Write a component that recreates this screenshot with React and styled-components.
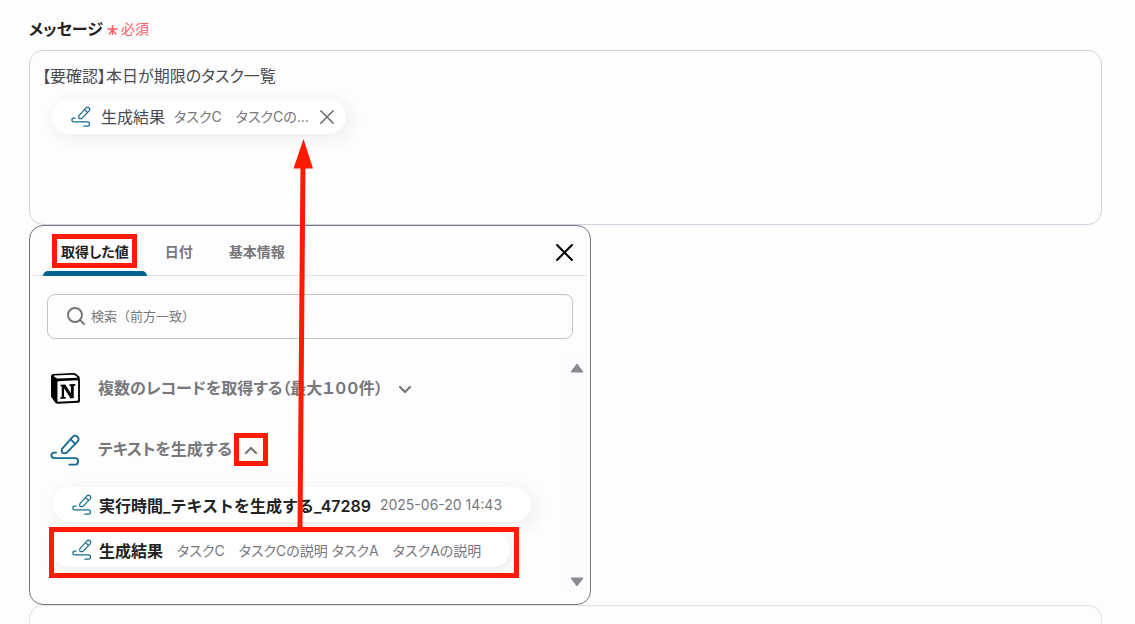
import React, { useState } from 'react';
import styled, { createGlobalStyle, css } from 'styled-components';

const GlobalStyle = createGlobalStyle`
  * {
    box-sizing: border-box;
  }

  body {
    margin: 0;
    background: #fdfdfd;
    color: #222222;
    font-family: Inter, "Noto Sans CJK JP", sans-serif;
    font-feature-settings: "palt";
  }

  button, input, textarea {
    font-family: inherit;
    margin: 0;
    padding: 0;
    border: 0;
    background: none;
    outline: none;
  }

  button {
    font-feature-settings: inherit;
    cursor: pointer;
  }

  svg {
    display: block;
    flex: none;
  }
`

const Page = styled.main`
  position: relative;
  padding: 16px 33px 0 29px;
`

const FieldLabel = styled.label`
  display: flex;
  align-items: center;
  height: 24px;
  margin-bottom: 10px;
  gap: 4px;
  font-size: 16px;
  font-weight: 600;
`

const Required = styled.span`
  display: flex;
  align-items: center;
  gap: 3px;
  color: #ff5c64;
  font-size: 14px;
  font-weight: 400;
`

const MessageBox = styled.section`
  min-height: 175px;
  padding: 13px 12px;
  border: 1px solid #d0d3e0;
  border-radius: 14px;
`

const MessageInput = styled.textarea`
  display: block;
  width: 100%;
  height: 24px;
  resize: none;
  overflow: hidden;
  color: #4a4a50;
  font-size: 16px;
  line-height: 24px;
  font-feature-settings: "palt";
`

const Pill = styled.div`
  display: flex;
  align-items: center;
  width: fit-content;
  height: 35px;
  padding: 0 ${props => props.$right || '29px'} 0 19px;
  border-radius: 18px;
  background: #ffffff;
  box-shadow: 3px 4px 14px 2px rgba(90, 60, 110, 0.07);
`

const Chip = styled(Pill)`
  margin: 11px 0 0 10px;
`

const ChipName = styled.span`
  margin: 0 9px;
  padding-bottom: 2px;
  color: #4a4a50;
  font-size: 16px;
  white-space: nowrap;
`

const ItemName = styled.span`
  margin: 0 ${props => props.$gap} 0 6px;
  font-size: 16px;
  font-weight: 600;
  font-feature-settings: normal;
  white-space: nowrap;
`

const PillValue = styled.span`
  padding-bottom: ${props => props.$raised ? '2px' : '0'};
  color: #77777c;
  font-size: 14px;
  white-space: pre;
`

const IconButton = styled.button`
  display: flex;
  color: ${props => props.$color || '#77777c'};
`

const ChipClose = styled(IconButton)`
  margin-left: 11px;
`

const Panel = styled.section`
  width: 562px;
  max-width: 100%;
  padding: 0 3px;
  border: 1px solid #77777c;
  border-radius: 14px;
`

const TabBar = styled.div`
  display: flex;
  align-items: center;
  height: 50px;
  padding: 0 14px 0 10px;
  border-bottom: 1px solid #e2e2e6;
`

const Tab = styled.button`
  position: relative;
  height: 50px;
  padding: 0 18px;
  color: #77777c;
  font-size: 14px;
  font-weight: 600;

  ${props => props.$active && css`
    color: #222222;

    &::after {
      content: '';
      position: absolute;
      left: 0;
      right: 0;
      bottom: 0;
      height: 5px;
      border-radius: 5px 5px 0 0;
      background: #00638f;
    }
  `}
`

const PanelClose = styled(IconButton)`
  margin-left: auto;
  padding-top: 4px;
`

const SearchBox = styled.label`
  display: flex;
  align-items: center;
  height: 45px;
  margin: 18px 14px 0;
  padding: 0 18px 2px;
  gap: 5px;
  border: 1px solid #c4c4c8;
  border-radius: 8px;
  color: #77777c;
`

const SearchInput = styled.input`
  flex: 1;
  min-width: 0;
  color: #222222;
  font-size: 13px;

  &::placeholder {
    color: #77777c;
    opacity: 1;
  }
`

const Results = styled.div`
  display: flex;
  justify-content: space-between;
  margin-top: 19px;
  padding-bottom: 13px;
`

const Groups = styled.div`
  flex: 1;
  min-width: 0;
  padding: 0 36px 24px 17px;
`

const GroupHeader = styled.button`
  display: flex;
  align-items: center;
  height: 61px;
  color: #77777c;
  font-size: 16px;
  font-weight: 600;
`

const GroupName = styled.span`
  margin: 0 ${props => props.$gap} 0 16px;
  padding-bottom: 4px;
  white-space: nowrap;
`

const Items = styled.div`
  display: flex;
  flex-direction: column;
  align-items: flex-start;
  gap: 10px;
  padding: 7px 0 0 3px;
`

const ScrollRail = styled.div`
  display: flex;
  flex-direction: column;
  justify-content: space-between;
  align-items: center;
  width: 20px;
  padding: 5px 0 4px;
  background: #fbfafc;
`

const NextBox = styled.section`
  height: 19px;
  border: 1px solid #e2e2e6;
  border-bottom: 0;
  border-radius: 14px 14px 0 0;
`

// red guide frame laid over the part it points at
const Marked = styled.span`
  position: relative;
  display: inline-flex;

  &::after {
    content: '';
    position: absolute;
    inset: ${props => props.$inset};
    border: 5px solid #ff1a00;
    pointer-events: none;
  }
`

const GuideArrow = styled.svg`
  position: absolute;
  left: 290px;
  top: 138px;
  pointer-events: none;
`

const GenerateIcon = ({ size }) => (
  <svg width={size} height={size} viewBox="0 0 33 33" fill="none" stroke="#156c8f" strokeWidth="1.9" strokeLinecap="round" strokeLinejoin="round">
    <path d="M12.2 18.4 V15.6 L23.6 2.8 Q25.8 0.6 28.2 2.8 Q30.6 5 28.6 7.6 L16.8 19.8 H13.6 Q12.2 19.8 12.2 18.4 Z" />
    <path d="M21.4 5.6 L26 10.2" />
    <path d="M6.3 19.2 H4.6 Q1.4 19.2 1.4 22 Q1.4 24.8 4.6 24.8 H26.2 Q29 24.8 29 28.2 Q29 31.6 26.2 31.6 H20" />
  </svg>
)

const NotionIcon = () => (
  <svg width="32" height="31" viewBox="0 0 31 30">
    <path d="M3 0.9 L22.5 0 Q24 0 25.2 0.8 L28.2 3.3 Q29 4.3 29 6 V27 Q29 28.6 27.5 28.8 L7.5 29.7 Q6 29.7 5.2 28.8 L1.5 23.7 Q1 23 1 22 V3.2 Q1 1.2 3 0.9 Z" fill="#000" />
    <path d="M4 2.5 L22.2 1.6 Q23.3 1.5 24.2 2.2 L26.4 3.9 Q26.9 4.4 26.2 4.5 L8.2 5.4 Q7.1 5.5 6.1 4.8 L3.8 3.2 Q3.2 2.6 4 2.5 Z" fill="#fff" />
    <path d="M8 8 L26.4 7 Q27.2 7 27.2 7.9 V25.9 Q27.2 26.8 26.3 26.9 L8.3 27.8 Q7.2 27.9 7.2 26.8 V9 Q7.2 8.1 8 8 Z" fill="#fff" />
    <path d="M10.2 11.4 L14.8 11.1 L20.2 19.6 V12.8 L18.8 12.3 V10.9 L24.6 10.6 V12 L23 12.5 V24.3 L20 24.6 L13.6 14.8 V23 L15.4 23.5 V24.8 L10 25.1 V23.8 L11.4 23.2 V13 L10.2 12.7 Z" fill="#000" />
  </svg>
)

const CrossIcon = ({ size, width }) => (
  <svg width={size} height={size} viewBox="0 0 16 16" stroke="currentColor" strokeWidth={width} strokeLinecap="round">
    <path d="M1 1 L15 15 M15 1 L1 15" />
  </svg>
)

const SearchIcon = () => (
  <svg width="20" height="20" viewBox="0 0 20 20" fill="none" stroke="currentColor" strokeWidth="2" strokeLinecap="round">
    <circle cx="9" cy="9" r="7" />
    <path d="M14 14 L18 18" />
  </svg>
)

const Chevron = ({ up }) => (
  <svg width="14" height="10" viewBox="0 0 14 10" fill="none" stroke="currentColor" strokeWidth="2.2" strokeLinecap="round" strokeLinejoin="round">
    <path d={up ? 'M2 8 L7 3 L12 8' : 'M2 3 L7 8 L12 3'} />
  </svg>
)

const Asterisk = () => (
  <svg width="11" height="18" viewBox="0 0 11 18" fill="none" stroke="currentColor" strokeWidth="1.4">
    <path d="M5.5 6 V16 M0.5 10 H10.5 M2 15.5 L5.5 10.5 L9 15.5" />
  </svg>
)

const ScrollArrow = ({ down }) => (
  <svg width="14" height="10" viewBox="0 0 14 10" fill="#8c8a8f" stroke="#8c8a8f" strokeLinejoin="round">
    <path d={down ? 'M1 1 H13 L7 9 Z' : 'M1 9 H13 L7 1 Z'} />
  </svg>
)

const tabs = ['取得した値', '日付', '基本情報'];

const App = () => {
  const [message, setMessage] = useState('【要確認】本日が期限のタスク一覧');
  const [query, setQuery] = useState('');
  const [activeTab, setActiveTab] = useState(tabs[0]);

  return (
    <Page>
      <GlobalStyle />
      <FieldLabel htmlFor="message">
        メッセージ
        <Required><Asterisk />必須</Required>
      </FieldLabel>
      <MessageBox>
        <MessageInput id="message" rows={1} value={message} onChange={(e) => setMessage(e.target.value)} />
        <Chip $right="12px">
          <GenerateIcon size={21} />
          <ChipName>生成結果</ChipName>
          <PillValue $raised>タスクC　タスクCの...</PillValue>
          <ChipClose aria-label="削除"><CrossIcon size={14} width={1.8} /></ChipClose>
        </Chip>
      </MessageBox>

      <Panel>
        <TabBar role="tablist">
          {tabs.map((tab, i) => (
            <Tab key={tab} role="tab" aria-selected={tab === activeTab} $active={tab === activeTab} onClick={() => setActiveTab(tab)}>
              {i === 0 ? <Marked $inset="-7px -8px -7px -9px">{tab}</Marked> : tab}
            </Tab>
          ))}
          <PanelClose $color="#000000" aria-label="閉じる"><CrossIcon size={17} width={1.9} /></PanelClose>
        </TabBar>
        <SearchBox>
          <SearchIcon />
          <SearchInput aria-label="検索" placeholder="検索（前方一致）" value={query} onChange={(e) => setQuery(e.target.value)} />
        </SearchBox>
        <Results>
          <Groups>
            <GroupHeader aria-expanded="false">
              <NotionIcon />
              <GroupName $gap="15px">複数のレコードを取得する（最大１００件）</GroupName>
              <Chevron />
            </GroupHeader>
            <GroupHeader aria-expanded="true">
              <GenerateIcon size={32} />
              <GroupName $gap="12px">テキストを生成する</GroupName>
              <Marked $inset="-12px -10px -11px"><Chevron up /></Marked>
            </GroupHeader>
            <Items>
              <Pill>
                <GenerateIcon size={21} />
                <ItemName $gap="9px">実行時間_テキストを生成する_47289</ItemName>
                <PillValue>2025-06-20 14:43</PillValue>
              </Pill>
              <Marked $inset="-5px -9px -11px -4px">
                <Pill>
                  <GenerateIcon size={21} />
                  <ItemName $gap="14px">生成結果</ItemName>
                  <PillValue>タスクC　タスクCの説明 タスクA　タスクAの説明</PillValue>
                </Pill>
              </Marked>
            </Items>
          </Groups>
          <ScrollRail>
            <ScrollArrow />
            <ScrollArrow down />
          </ScrollRail>
        </Results>
      </Panel>
      <NextBox />

      <GuideArrow width="26" height="390" viewBox="0 0 26 390">
        <path d="M13 24 L10 389" stroke="#ff1a00" strokeWidth="5" />
        <path d="M13.5 1 L23 30.5 H3.5 Z" fill="#ff1a00" />
      </GuideArrow>
    </Page>
  );
};

export default App
